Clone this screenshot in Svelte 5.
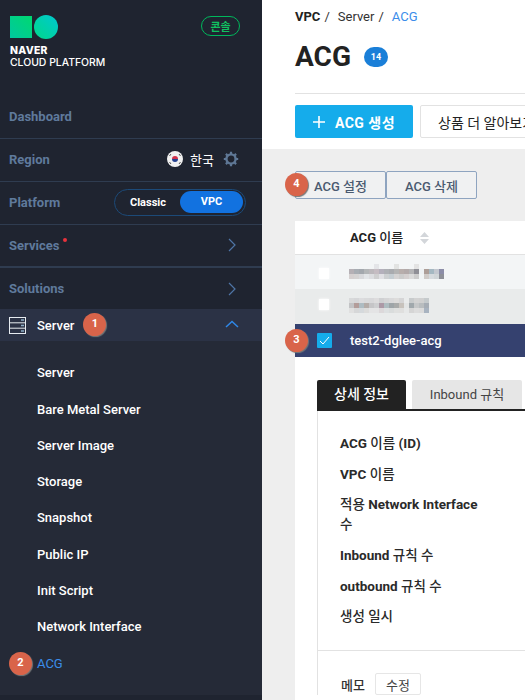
<script>
  const blurA = [
    ['','','','','','#e4e5e8','','','','#e2e3e2','','','','#e3e3e3','','','','',''],
    ['#b5b0b5','#a8adb3','#a3a8ae','#b3b6b8','#bcb8bc','#c5bcc2','#b4b0bc','#aeb0b5','#a9abaf','#b4b4b4','#b8aeac','#b3aaaa','#b4b4b6','#8f8f96','#eef1f3','#ad9e98','#a5b8c2','#c3c7cf','#8c8da8'],
    ['#d5d0d0','#d5d3d3','#d8d9dc','#e2e5e8','#dcdde0','#cfcfd0','#e0e0e4','#cdd0d2','#c5cdd2','#d5d3d3','#cccccc','#d5d0d0','#dadada','#cccccc','#f1f4f5','#d0cbc8','#d6dade','#d0d5d8','#8e9098']
  ];
  const blurB = [
    ['#d8d9da','#d5d6d8','#dcdcde','#d9dadb','#d8d8da','#dddcdd','#cfd0d2','#d5d5d6','#d9d9da','#dddcdb','#d5d5d6','#e9ebeb','#c8cbcc','#d2d2d2','#d0d0d0','#c5cacc'],
    ['#c2c3c5','#b39d9a','#aebcc2','#b4aca8','#c5c5c7','#cdced0','#ac99a6','#aebcc0','#9ea5a8','#a9abaa','#c7c2bc','#e2e4e4','#a0a8ac','#c5c7c8','#b9bdbf','#a6adb5'],
    ['#e0e0e0','#d6d7d8','#d5d9dc','#dcdcdb','#e4e4e5','#e4e4e5','#dcd8da','#dde0e1','#d9dcdc','#dfe0df','#dfdfde','#e6e8e8','#d5d5d5','#dcdcdc','#dadada','#a8b3c0']
  ];
  const subItems = ['Server','Bare Metal Server','Server Image','Storage','Snapshot','Public IP','Init Script','Network Interface'];
</script>

<div class="page">
  <aside class="side">
    <div class="brand">
      <div class="logo-col">
        <div class="marks"><span class="sq"></span><span class="ci"></span></div>
        <div class="naver">NAVER</div>
        <div class="cloud">CLOUD PLATFORM</div>
      </div>
      <span class="console">콘솔</span>
    </div>
    <div class="row"><span class="lab">Dashboard</span></div>
    <div class="row">
      <span class="lab">Region</span>
      <div class="region">
        <svg class="flag" viewBox="0 0 16 16" width="16" height="16"><circle cx="8" cy="8" r="8" fill="#f0f0f0"/><path d="M5 8a3 3 0 0 1 6 0z" fill="#d0304a"/><path d="M5 8a3 3 0 0 0 6 0z" fill="#24408e"/><g stroke="#555" stroke-width="1"><path d="M2.500 5l1.500-2M12 3l1.500 2M2.500 11l1.500 2M12 13l1.500-2"/></g></svg>
        <span class="kr">한국</span>
        <svg class="gear" viewBox="0 0 16 16" width="16" height="16"><circle cx="8" cy="8" r="4.600" fill="none" stroke="#5f7896" stroke-width="2.400"/><g stroke="#5f7896" stroke-width="2.200"><path d="M8 .8v2.500M8 12.700v2.500M.8 8h2.500M12.700 8h2.500M2.900 2.900l1.800 1.800M11.300 11.300l1.800 1.800M13.100 2.900l-1.800 1.800M4.700 11.300l-1.800 1.800"/></g></svg>
      </div>
    </div>
    <div class="row">
      <span class="lab">Platform</span>
      <div class="toggle"><span class="off">Classic</span><span class="on">VPC</span></div>
    </div>
    <div class="row thick">
      <span class="lab">Services<i class="dot"></i></span>
      <svg class="chev" viewBox="0 0 8 14" width="8" height="14"><path d="M1 1l6 6-6 6" fill="none" stroke="#4f75a6" stroke-width="1.200"/></svg>
    </div>
    <div class="row last">
      <span class="lab">Solutions</span>
      <svg class="chev" viewBox="0 0 8 14" width="8" height="14"><path d="M1 1l6 6-6 6" fill="none" stroke="#4f75a6" stroke-width="1.200"/></svg>
    </div>
    <div class="server-row">
      <svg class="srv" viewBox="0 0 17 17" width="17" height="17"><rect x=".5" y=".5" width="16" height="16" fill="none" stroke="#e6ebf0"/><path d="M.5 5.800h16M.5 11.200h16" stroke="#e6ebf0"/><path d="M12 3h3M12 8.500h3M12 14h3" stroke="#8fb0c8" stroke-width="1.400"/></svg>
      <span class="srv-name">Server</span>
      <span class="badge b1">1</span>
      <svg class="up" viewBox="0 0 14 8" width="14" height="8"><path d="M1 7l6-5.500 6 5.500" fill="none" stroke="#2f88e8" stroke-width="1.500"/></svg>
    </div>
    <ul class="sub">
      {#each subItems as item}
        <li>{item}</li>
      {/each}
      <li class="active"><span class="badge b2">2</span>ACG</li>
    </ul>
  </aside>

  <main class="main">
    <div class="head">
      <div class="crumb"><b>VPC</b><span class="sl">/</span><span>Server</span><span class="sl">/</span><span class="cur">ACG</span></div>
      <div class="title"><h1>ACG</h1><span class="count">14</span></div>
      <div class="actions">
        <button class="create"><svg viewBox="0 0 12 12" width="12" height="12"><path d="M6 0v12M0 6h12" stroke="#fff" stroke-width="1.600"/></svg><span class="create-text">ACG 생성</span></button>
        <button class="more">상품 더 알아보기</button>
      </div>
    </div>
    <div class="body">
      <div class="tools">
        <span class="badge b4">4</span>
        <button class="tool">ACG 설정</button>
        <button class="tool">ACG 삭제</button>
      </div>
      <div class="card">
        <div class="thead">
          <span class="th">ACG <span class="ko">이름</span></span>
          <svg class="sort" viewBox="0 0 9 12" width="9" height="12"><path d="M4.500 0l4.500 5H0zM4.500 12L0 7h9z" fill="#d3d6da"/></svg>
        </div>
        <div class="tr a">
          <span class="ck"></span>
          <div class="blur up4">
            {#each blurA as line}
              <div class="bline">{#each line as c}<i style:background={c || 'transparent'}></i>{/each}</div>
            {/each}
          </div>
        </div>
        <div class="tr b">
          <span class="ck"></span>
          <div class="blur up1">
            {#each blurB as line}
              <div class="bline">{#each line as c}<i style:background={c}></i>{/each}</div>
            {/each}
          </div>
        </div>
        <div class="tr sel">
          <span class="badge b3">3</span>
          <span class="cked"><svg viewBox="0 0 15 15" width="15" height="15"><path d="M3 8l3 3 6-7" fill="none" stroke="#fff" stroke-width="1"/></svg></span>
          <span class="name">test2-dglee-acg</span>
        </div>
        <div class="detail">
          <div class="tabs">
            <span class="tab on-tab">상세 정보</span>
            <span class="tab">Inbound 규칙</span>
          </div>
          <div class="panel">
            <dl class="info">
              <dt>ACG <span class="ko">이름</span> (ID)</dt>
              <dt>VPC <span class="ko">이름</span></dt>
              <dt><span class="ko">적용</span> Network Interface <span class="ko">수</span></dt>
              <dt>Inbound <span class="ko">규칙 수</span></dt>
              <dt>outbound <span class="ko">규칙 수</span></dt>
              <dt><span class="ko">생성 일시</span></dt>
            </dl>
            <div class="memo"><span>메모</span><button>수정</button></div>
          </div>
        </div>
      </div>
    </div>
  </main>
</div>

<style>
  :global(body) { margin: 0; background: #eee; }
  .page {
    display: flex;
    width: 525px;
    height: 700px;
    overflow: hidden;
    font-family: Roboto, "Noto Sans CJK KR", sans-serif;
  }
  .side {
    width: 262px;
    flex: none;
    height: 700px;
    background: #1f2430;
    display: flex;
    flex-direction: column;
  }
  .brand {
    height: 96px;
    flex: none;
    padding: 15px 22px 0 10px;
    box-sizing: border-box;
    display: flex;
    justify-content: space-between;
    align-items: flex-start;
  }
  .marks { display: flex; align-items: center; gap: 2px; height: 24px; }
  .sq { width: 22px; height: 22px; background: linear-gradient(45deg, #00c8a0, #00d870); }
  .ci { width: 24px; height: 24px; border-radius: 50%; background: linear-gradient(45deg, #00d88a, #00c8d0); }
  .naver { margin-top: 6px; font: 800 10.400px/12px Inter, sans-serif; color: #fff; letter-spacing: .3px; }
  .cloud { font: 500 10.400px/11px Inter, sans-serif; color: #fff; white-space: nowrap; }
  .console {
    margin-top: 1px;
    width: 37px; height: 18px;
    border: 1px solid #00b85c; border-radius: 10px;
    color: #10c060;
    font: 700 11px/18px "Noto Sans CJK KR", sans-serif;
    text-align: center;
  }
  .row {
    height: 43px;
    flex: none;
    box-sizing: border-box;
    padding: 0 26px 2px 9px;
    display: flex;
    align-items: center;
    justify-content: space-between;
    border-bottom: 1px solid #2f3c50;
  }
  .row.thick { border-bottom: 2px solid #2f3c50; padding-bottom: 1px; }
  .row.last { border-bottom: 0; height: 41px; padding-bottom: 0; }
  .lab { color: #5f7a9c; font-size: 13px; font-weight: 700; position: relative; }
  .dot {
    position: absolute; top: 0; right: -8px;
    width: 4px; height: 4px; border-radius: 50%;
    background: #e8323c;
  }
  .region { display: flex; align-items: center; margin-right: -10px; }
  .flag { margin-right: 7px; margin-left: -1px; }
  .kr { color: #fff; font: 400 13px "Noto Sans CJK KR", sans-serif; margin-right: 9px; }
  .gear { margin-right: 7px; }
  .toggle {
    width: 132px; height: 27px;
    margin-right: -10px;
    box-sizing: border-box;
    border: 1px solid #1c4a78;
    border-radius: 14px;
    padding: 2px;
    display: flex;
    align-items: center;
    justify-content: space-between;
    color: #fff;
    font-size: 11px;
    font-weight: 700;
  }
  .off { width: 62px; text-align: center; }
  .on {
    width: 63px; height: 22px; line-height: 22px;
    text-align: center; background: #1272e0; border-radius: 11px;
  }
  .server-row {
    height: 32px;
    flex: none;
    box-sizing: border-box;
    background: #2b3245;
    display: flex;
    align-items: center;
    padding: 0 23px 0 9px;
    color: #fff;
    font-size: 13px;
    font-weight: 500;
  }
  .srv-name { margin-left: 11px; }
  .up { margin-left: auto; margin-bottom: 2px; }
  .badge {
    width: 23px; height: 23px;
    border-radius: 50%;
    background: #d9644a;
    color: #fff;
    font: 700 11px/22px Roboto, sans-serif;
    text-align: center;
    box-shadow: 1px 1px 1px #777;
    flex: none;
  }
  .b1 { margin-left: 9px; margin-bottom: 2px; }
  .sub {
    list-style: none;
    margin: 0;
    padding: 14.250px 0 0;
    height: 354px;
    flex: none;
    box-sizing: border-box;
    background: #252a37;
    color: #fff;
    font-size: 13px;
    font-weight: 500;
  }
  .sub li {
    height: 36.300px;
    line-height: 36px;
    padding-left: 37px;
    position: relative;
  }
  .sub .active { color: #3b8dea; font-weight: 400; }
  .b2 { position: absolute; left: 9px; top: 6px; }
  .main { flex: 1; min-width: 0; overflow: hidden; display: flex; flex-direction: column; }
  .head {
    background: #fff;
    height: 149px;
    box-sizing: border-box;
    padding: 8px 0 0 33px;
    flex: none;
  }
  .crumb { display: flex; font-size: 13px; line-height: 17px; color: #333; white-space: nowrap; }
  .crumb b { font-weight: 700; color: #222; }
  .sl { margin: 0 8px 0 4px; }
  .cur { color: #3b8dea; }
  .title { display: flex; align-items: center; margin-top: 15px; height: 34px; }
  h1 { margin: 0; font: 700 28px/34px Roboto, sans-serif; color: #222; }
  .count {
    margin-left: 13px;
    width: 24px; height: 20px;
    border-radius: 10px;
    background: #1a7fd8;
    color: #fff;
    font: 700 9px/20px Roboto, sans-serif;
    text-align: center;
  }
  .actions {
    margin-top: 19px;
    padding-top: 11px;
    border-top: 1px solid #e2e2e2;
    display: flex;
    gap: 7px;
    width: 300px;
  }
  button { font-family: inherit; cursor: pointer; }
  .create {
    flex: none;
    width: 118px; height: 33px;
    background: #15aceb;
    border: 0; border-radius: 2px;
    color: #fff;
    font-size: 14px;
    font-weight: 700;
    display: flex; align-items: center; justify-content: center; gap: 10px;
    padding: 0;
  }
  .create-text { letter-spacing: .5px; }
  .more {
    flex: none;
    width: 140px; height: 33px;
    background: #fff;
    border: 1px solid #e2e2e2; border-radius: 2px;
    color: #222;
    font-size: 14px;
    padding: 0 0 0 17px;
    text-align: left;
    white-space: nowrap;
  }
  .body { flex: 1; background: #eee; padding: 22px 0 0 33px; position: relative; }
  .tools { display: flex; position: relative; height: 28px; }
  .tool {
    width: 91px; height: 28px;
    box-sizing: border-box;
    background: #f0f1f2;
    border: 1px solid #8ea4c0;
    border-radius: 2px;
    color: #4a5a70;
    font-size: 13px;
    font-weight: 500;
    padding: 0;
  }
  .b4 { position: absolute; left: -10px; top: 2px; }
  .card { margin-top: 22px; background: #fff; height: 500px; }
  .thead {
    height: 33px;
    border-bottom: 1px solid #e2e2e2;
    display: flex;
    align-items: center;
    padding-left: 55px;
  }
  .th { font-size: 13px; font-weight: 700; color: #222; margin-bottom: 2px; }
  .ko { font-weight: 500; }
  .sort { margin-left: 17px; }
  .tr { position: relative; display: flex; align-items: flex-start; padding-left: 24px; }
  .tr.a { background: #f3f5f6; height: 34px; padding-top: 13px; box-sizing: border-box; }
  .tr.b { background: #e9ebeb; height: 35px; padding-top: 10px; box-sizing: border-box; }
  .ck { width: 10px; height: 11px; background: #fff; box-shadow: 0 0 3px #fff; }
  .blur { display: flex; flex-direction: column; margin-left: 20px; }
  .up4 { margin-top: -4px; }
  .up1 { margin-top: -1px; }
  .bline { display: flex; }
  .bline i { width: 5px; height: 5px; display: block; }
  .tr.sel { background: #35416f; height: 33px; padding-left: 22px; align-items: center; padding-bottom: 1px; box-sizing: border-box; }
  .b3 { position: absolute; left: -10px; top: 5px; }
  .cked {
    width: 15px; height: 15px;
    background: #15aceb;
    border-radius: 1px;
    display: block;
    margin-top: 1px;
  }
  .cked svg { display: block; }
  .name { margin-left: 18px; color: #fff; font-size: 13px; font-weight: 500; }
  .detail { padding: 23px 0 0 22px; }
  .tabs { display: flex; gap: 6px; height: 29px; border-bottom: 2px solid #222; width: 300px; }
  .tab {
    width: 110px; height: 29px;
    background: #e6e6e6;
    border-radius: 2px 2px 0 0;
    color: #444;
    font-size: 13px;
    line-height: 29px;
    text-align: center;
  }
  .on-tab { width: 89px; background: #222; color: #fff; font-size: 14px; font-weight: 500; }
  .panel { border-left: 1px solid #e2e2e2; width: 300px; }
  .info {
    margin: 0;
    padding: 22px 0 0 22px;
    height: 240px;
    box-sizing: border-box;
    border-bottom: 1px solid #e2e2e2;
  }
  dt {
    width: 140px;
    font-size: 13.500px;
    font-weight: 700;
    line-height: 20px;
    color: #2a2a2a;
    margin-bottom: 10.700px;
  }
  .memo { display: flex; align-items: center; padding: 22px 0 0 23px; font-size: 13px; font-weight: 500; color: #333; gap: 10px; }
  .memo button {
    width: 46px; height: 22px;
    background: #fff;
    border: 1px solid #e6e6e6;
    border-radius: 2px;
    font-size: 13px;
    color: #444;
    padding: 0;
  }
</style>
